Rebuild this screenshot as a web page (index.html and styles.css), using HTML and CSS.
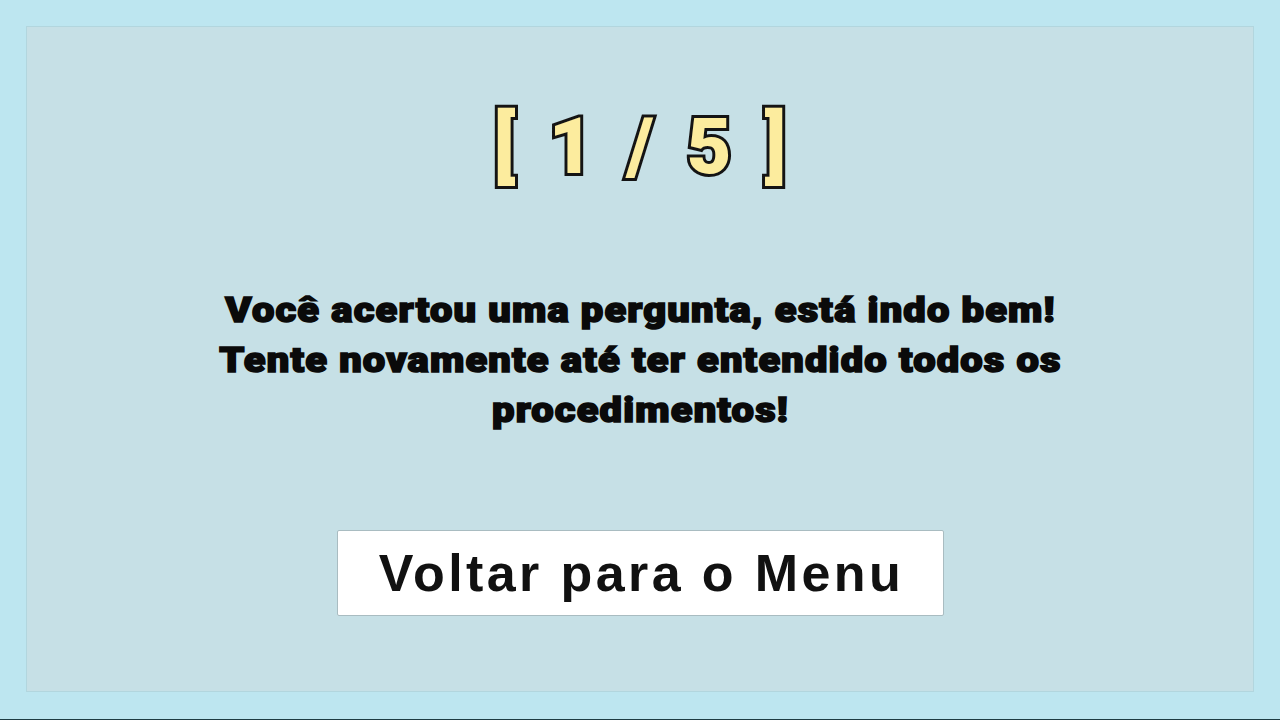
FILE: index.html
```html
<!DOCTYPE html>
<html lang="pt">
<head>
<meta charset="utf-8">
<link rel="stylesheet" href="styles.css">
<title>Resultado</title>
</head>
<body>
<div class="screen">
  <main class="panel">
    <h1 class="score">[ 1 / 5 ]</h1>
    <p class="message">Você acertou uma pergunta, está indo bem!<br>Tente novamente até ter entendido todos os<br>procedimentos!</p>
    <button class="menu-btn" type="button">Voltar para o Menu</button>
  </main>
</div>
</body>
</html>
```
FILE: styles.css
```css
html, body {
  margin: 0;
  padding: 0;
  width: 1280px;
  height: 720px;
  overflow: hidden;
}
body {
  background: #bde6f0;
}
.screen {
  box-sizing: border-box;
  width: 1280px;
  height: 720px;
  padding: 26px 26px 27px 26px;
  border-bottom: 1px solid #1d3b42;
}
.panel {
  box-sizing: border-box;
  width: 100%;
  height: 666px;
  background: #c6e0e6;
  border: 1px solid #b2d6de;
  display: flex;
  flex-direction: column;
  align-items: center;
}
.score {
  margin: 72px 0 0 0;
  font-family: Roboto, "Liberation Sans", sans-serif;
  font-weight: 900;
  font-size: 77px;
  line-height: 96px;
  letter-spacing: 7px;
  color: #fcec9e;
  -webkit-text-stroke: 6px #141414;
  paint-order: stroke fill;
  padding-left: 7px;
}
.message {
  margin: 91px 0 0 0;
  font-family: Roboto, "Liberation Sans", sans-serif;
  font-weight: 900;
  font-size: 35px;
  line-height: 50px;
  letter-spacing: 1px;
  text-align: center;
  color: #0a0a0a;
  -webkit-text-stroke: 1.6px #0a0a0a;
  transform: scaleX(1.14);
}
.menu-btn {
  margin-top: 94px;
  width: 607px;
  height: 86px;
  background: #ffffff;
  border: 1px solid #a9bcc1;
  border-radius: 2px;
  font-family: "Liberation Sans", Arial, sans-serif;
  font-weight: 700;
  font-size: 52px;
  letter-spacing: 3.4px;
  color: #111;
  padding: 0 0 0 3px;
}
```
